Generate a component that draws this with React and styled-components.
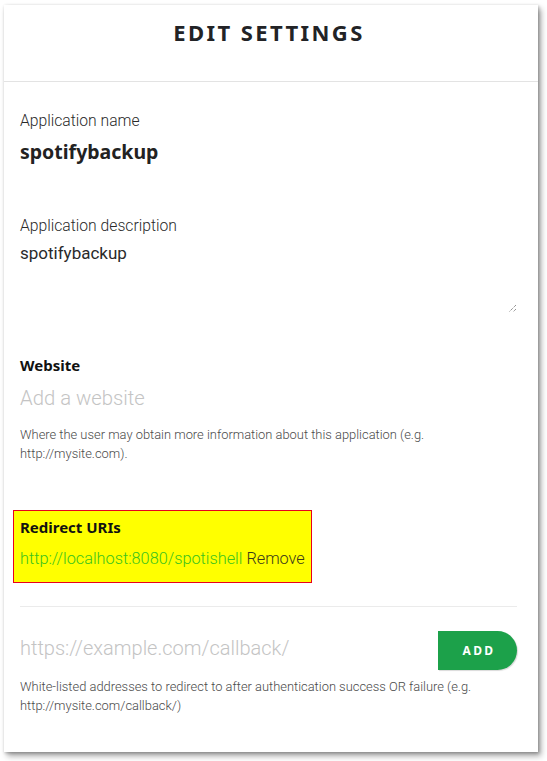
import React from "react";
import styled, { createGlobalStyle } from "styled-components";

const Global = createGlobalStyle`
  html, body { margin: 0; padding: 0; background: #ffffff; }
  body { font-family: Roboto, "Liberation Sans", sans-serif; color: #333; }
  * { box-sizing: border-box; }
`;

const Page = styled.div`
  padding: 5px 0 0 4px;
  width: 547px;
  height: 761px;
`;

const Card = styled.div`
  width: 534px;
  height: 747px;
  background: #fff;
  box-shadow: 1px 1px 3px rgba(0,0,0,0.25), 3px 4px 6px rgba(0,0,0,0.35);
  display: flex;
  flex-direction: column;
`;

const Header = styled.div`
  height: 77px;
  border-bottom: 1px solid #e3e3e3;
  display: flex;
  justify-content: center;
  padding: 13px 4px 0 0;
`;

const Title = styled.h1`
  margin: 0;
  font-family: "Noto Sans", "Liberation Sans", sans-serif;
  font-weight: 700;
  font-size: 22px;
  letter-spacing: 2.4px;
  color: #222326;
  line-height: 28px;
`;

const Body = styled.div`
  padding: 29px 21px 0 12px;
  display: flex;
  flex-direction: column;
`;

const Field = styled.div`
  display: flex;
  flex-direction: column;
  margin-bottom: ${p => p.$mb || 0}px;
`;

const Label = styled.div`
  font-size: 15.7px;
  line-height: 20px;
  color: #2a2a2a;
  font-weight: 300;
  font-family: Roboto, "Liberation Sans", sans-serif;
`;

const BoldLabel = styled.div`
  font-family: "Noto Sans", "Liberation Sans", sans-serif;
  font-weight: 700;
  font-size: 15px;
  line-height: 20px;
  color: #111;
`;

const NameValue = styled.div`
  font-family: "Noto Sans", "Liberation Sans", sans-serif;
  font-weight: 700;
  font-size: 19.5px;
  line-height: 26px;
  color: #222;
  margin-top: 8px;
`;

const TextArea = styled.div`
  position: relative;
  height: 73px;
  margin-top: 6px;
  font-size: 17px;
  line-height: 22px;
  color: #2a2a2a;
`;

const Grip = styled.svg`
  position: absolute;
  right: 0;
  bottom: 2px;
`;

const Placeholder = styled.div`
  font-size: ${p => p.$size || 20}px;
  line-height: 26px;
  color: #c4c4c4;
  font-weight: 300;
  margin-top: ${p => p.$mt || 0}px;
  margin-bottom: ${p => p.$mb || 0}px;
`;

const Help = styled.div`
  font-size: 12.9px;
  line-height: 19px;
  color: #4a4a4a;
  font-weight: 300;
  margin-top: ${p => p.$mt || 0}px;
`;

const Highlight = styled.div`
  align-self: flex-start;
  margin-left: -3px;
  width: 299px;
  height: 73px;
  background: #ffff00;
  border: 1px solid #e8001c;
  padding: 6px 6px 0;
  display: flex;
  flex-direction: column;
`;

const UriRow = styled.div`
  margin-top: 12px;
  font-size: 16.3px;
  line-height: 20px;
  font-weight: 300;
  white-space: nowrap;
`;

const UriLink = styled.span`
  color: #3cc41d;
`;

const Remove = styled.span`
  color: #3a3a1a;
`;

const Divider = styled.div`
  height: 1px;
  background: #ebebeb;
  margin: 23px 0 23px 4px;
`;

const InputRow = styled.div`
  display: flex;
  align-items: center;
  justify-content: space-between;
  padding-left: 4px;
  height: 40px;
`;

const AddButton = styled.button`
  width: 79px;
  height: 39px;
  border: none;
  border-radius: 0 20px 20px 0;
  background: #1ca14a;
  color: #fff;
  font-family: "Noto Sans", "Liberation Sans", sans-serif;
  font-weight: 700;
  font-size: 12px;
  letter-spacing: 2.4px;
  padding: 0 0 0 3px;
  box-shadow: 1px 1px 1px rgba(0,0,0,0.15);
`;

const Indent = styled.div`
  padding-left: 4px;
`;

export default function App() {
  return (
    <>
      <Global />
      <Page>
        <Card>
          <Header>
            <Title>EDIT SETTINGS</Title>
          </Header>
          <Body>
            <Indent>
              <Field $mb={51}>
                <Label>Application name</Label>
                <NameValue>spotifybackup</NameValue>
              </Field>
              <Field $mb={40}>
                <Label>Application description</Label>
                <TextArea>
                  spotifybackup
                  <Grip width="9" height="9" viewBox="0 0 9 9">
                    <path d="M8 1 L1 8 M8 5 L5 8" stroke="#666" strokeWidth="1" strokeDasharray="1 1" fill="none" />
                  </Grip>
                </TextArea>
              </Field>
              <Field $mb={47}>
                <BoldLabel>Website</BoldLabel>
                <Placeholder $mt={10} $size={20.3}>Add a website</Placeholder>
                <Help $mt={14}>
                  Where the user may obtain more information about this application (e.g.
                  <br />
                  http://mysite.com).
                </Help>
              </Field>
            </Indent>
            <Highlight>
              <BoldLabel>Redirect URIs</BoldLabel>
              <UriRow>
                <UriLink>http://localhost:8080/spotishell</UriLink> <Remove>Remove</Remove>
              </UriRow>
            </Highlight>
            <Divider />
            <InputRow>
              <Placeholder $size={20} $mb={4}>https://example.com/callback/</Placeholder>
              <AddButton>ADD</AddButton>
            </InputRow>
            <Indent>
              <Help $mt={7}>
                White-listed addresses to redirect to after authentication success OR failure (e.g.
                <br />
                http://mysite.com/callback/)
              </Help>
            </Indent>
          </Body>
        </Card>
      </Page>
    </>
  );
}
